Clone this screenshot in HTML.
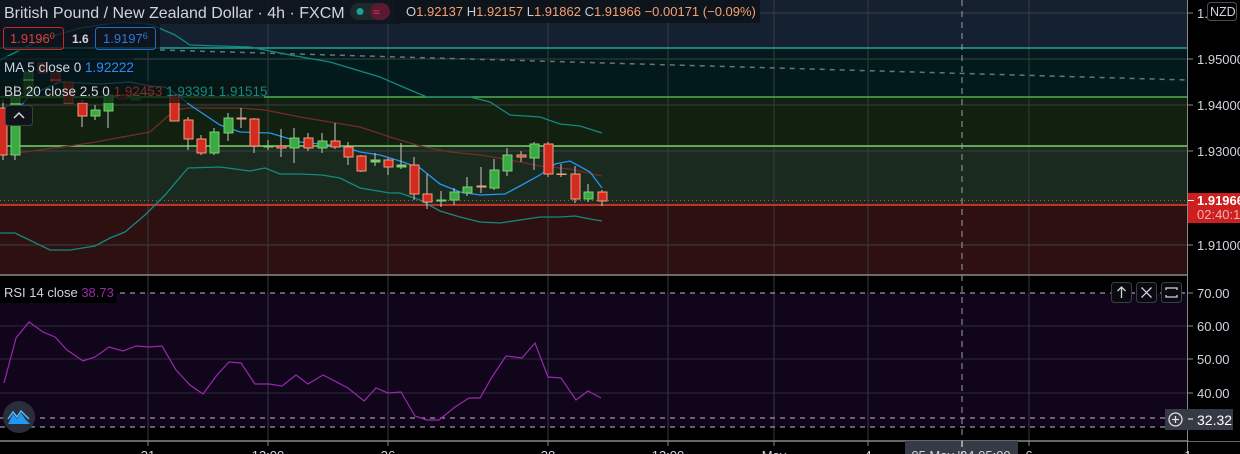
<!DOCTYPE html>
<html><head><meta charset="utf-8"><style>
html,body{margin:0;padding:0;background:#000;width:1240px;height:454px;overflow:hidden}
svg{display:block;font-family:"Liberation Sans",sans-serif}
</style></head><body>
<svg width="1240" height="454" viewBox="0 0 1240 454" xmlns="http://www.w3.org/2000/svg">
<rect x="0" y="0" width="1188" height="48" fill="#152130"/>
<rect x="0" y="48" width="1188" height="49" fill="#031a1c"/>
<rect x="0" y="97" width="1188" height="49" fill="#12200f"/>
<rect x="0" y="146" width="1188" height="59" fill="#1b2a1f"/>
<rect x="0" y="205" width="1188" height="70" fill="#2e1010"/>
<rect x="0" y="276" width="1188" height="165" fill="#000"/>
<rect x="0" y="293" width="1188" height="134" fill="#10051a"/>
<g stroke="#3a4040" stroke-width="1">
<line x1="0" y1="13" x2="1188" y2="13"/><line x1="0" y1="59" x2="1188" y2="59"/>
<line x1="0" y1="105" x2="1188" y2="105"/><line x1="0" y1="151" x2="1188" y2="151"/>
<line x1="0" y1="245" x2="1188" y2="245"/>
</g>
<g stroke="#2e2a3c"><line x1="0" y1="326" x2="1188" y2="326"/><line x1="0" y1="359" x2="1188" y2="359"/><line x1="0" y1="393" x2="1188" y2="393"/></g>
<g stroke="#363c40" stroke-width="1">
<line x1="148" y1="0" x2="148" y2="441"/><line x1="268" y1="0" x2="268" y2="441"/>
<line x1="388" y1="0" x2="388" y2="441"/><line x1="548" y1="0" x2="548" y2="441"/>
<line x1="668" y1="0" x2="668" y2="441"/><line x1="774" y1="0" x2="774" y2="441"/>
<line x1="868" y1="0" x2="868" y2="441"/><line x1="1029" y1="0" x2="1029" y2="441"/>
</g>
<line x1="0" y1="48" x2="1188" y2="48" stroke="#1fa59a" stroke-width="1.5"/>
<line x1="0" y1="97" x2="1188" y2="97" stroke="#4caf50" stroke-width="1.5"/>
<line x1="0" y1="146" x2="1188" y2="146" stroke="#7ccf6e" stroke-width="1.5"/>
<line x1="0" y1="205" x2="1188" y2="205" stroke="#f23a2f" stroke-width="1.5"/>
<line x1="0" y1="200.5" x2="1188" y2="200.5" stroke="#f23a2f" stroke-width="1" stroke-dasharray="1,3"/>
<line x1="160" y1="50" x2="1187" y2="80" stroke="#6a7478" stroke-width="1.5" stroke-dasharray="5,5"/>
<line x1="0" y1="275" x2="1188" y2="275" stroke="#888" stroke-width="1.5"/>
<line x1="0" y1="441" x2="1240" y2="441" stroke="#888" stroke-width="1.5"/>
<line x1="1187.5" y1="0" x2="1187.5" y2="454" stroke="#888" stroke-width="1"/>
<line x1="962" y1="0" x2="962" y2="454" stroke="#9aa0a8" stroke-width="1" stroke-dasharray="6,5"/>
<g stroke="#c0bcc8" stroke-width="1" stroke-dasharray="5,5">
<line x1="0" y1="293" x2="1188" y2="293"/><line x1="0" y1="418" x2="1188" y2="418"/><line x1="0" y1="427" x2="1188" y2="427"/>
</g>
<polyline fill="none" stroke="#128a80" stroke-width="1.3" points="0,60 40,40 80,28 120,22 150,24 175,35 190,45 250,47 290,55 330,62 380,77 410,90 427,97 470,97 490,102 510,115 540,117 560,124 580,126 602,133"/>
<polyline fill="none" stroke="#128a80" stroke-width="1.3" points="0,233 15,233 50,250 70,250 95,246 110,238 125,232 145,215 165,195 188,168 220,167 250,171 265,168 280,174 300,174 322,175 340,178 360,188 390,193 400,193 420,200 440,211 460,217 480,222 500,223 520,220 540,217 560,217 575,216 590,219 602,221"/>
<polyline fill="none" stroke="#742a28" stroke-width="1.3" points="0,155 40,150 90,143 150,132 175,110 188,108 240,108 265,110 300,117 330,122 360,127 390,137 420,146 450,152 480,155 510,160 540,166 570,169 602,176"/>
<polyline fill="none" stroke="#2196f3" stroke-width="1.3" points="0,130 30,95 60,82 100,84 130,82 150,86 165,87 175,93 190,105 205,115 220,125 240,132 270,133 300,142 330,145 345,147 360,152 380,155 400,161 420,168 440,184 460,192 480,195 505,194 520,186 540,175 555,164 570,161 590,172 602,188"/>
<g stroke="#c8c8c8" stroke-width="1">
<line x1="3" y1="100" x2="3" y2="160"/><line x1="15" y1="85" x2="15" y2="160"/><line x1="82" y1="100" x2="82" y2="127"/><line x1="95" y1="105" x2="95" y2="120"/><line x1="108" y1="90" x2="108" y2="128"/>
<line x1="188" y1="117" x2="188" y2="150"/><line x1="201" y1="135" x2="201" y2="155"/><line x1="214" y1="128" x2="214" y2="155"/><line x1="228" y1="113" x2="228" y2="141"/><line x1="241" y1="108" x2="241" y2="128"/><line x1="254" y1="118" x2="254" y2="153"/><line x1="268" y1="140" x2="268" y2="150"/><line x1="281" y1="129" x2="281" y2="157"/><line x1="294" y1="128" x2="294" y2="163"/>
<line x1="308" y1="133" x2="308" y2="151"/><line x1="322" y1="133" x2="322" y2="153"/><line x1="335" y1="123" x2="335" y2="149"/><line x1="348" y1="142" x2="348" y2="165"/><line x1="361" y1="155" x2="361" y2="172"/><line x1="375" y1="153" x2="375" y2="166"/><line x1="388" y1="158" x2="388" y2="175"/><line x1="401" y1="143" x2="401" y2="169"/><line x1="414" y1="157" x2="414" y2="200"/><line x1="427" y1="174" x2="427" y2="209"/><line x1="441" y1="191" x2="441" y2="207"/><line x1="454" y1="188" x2="454" y2="205"/><line x1="467" y1="177" x2="467" y2="196"/><line x1="481" y1="167" x2="481" y2="193"/><line x1="494" y1="159" x2="494" y2="190"/><line x1="507" y1="148" x2="507" y2="176"/><line x1="521" y1="151" x2="521" y2="162"/><line x1="534" y1="142" x2="534" y2="170"/><line x1="548" y1="142" x2="548" y2="177"/><line x1="561" y1="164" x2="561" y2="177"/><line x1="575" y1="166" x2="575" y2="203"/><line x1="588" y1="184" x2="588" y2="202"/><line x1="602" y1="190" x2="602" y2="206"/>
</g>
<g stroke-width="1">
<rect x="-3" y="108" width="10" height="47" fill="#d32a22" stroke="#f5a07a"/>
<rect x="11" y="95" width="9" height="60" fill="#3aaa45" stroke="#7ad06c"/>
<rect x="24" y="72" width="9" height="25" fill="#28662c" stroke="#3c8a40"/>
<rect x="38" y="63" width="9" height="10" fill="#6a1e1c" stroke="#8a3a2a"/>
<rect x="51" y="73" width="9" height="9" fill="#6a1e1c" stroke="#8a3a2a"/>
<rect x="64" y="82" width="9" height="21" fill="#a82420" stroke="#b86a4a"/>
<rect x="78" y="103" width="9" height="13" fill="#d32a22" stroke="#f5a07a"/>
<rect x="91" y="110" width="9" height="6" fill="#3aaa45" stroke="#7ad06c"/>
<rect x="104" y="95" width="9" height="16" fill="#3aaa45" stroke="#7ad06c"/>
<rect x="118" y="95" width="9" height="4" fill="#6a1e1c" stroke="#8a3a2a"/>
<rect x="131" y="94" width="9" height="6" fill="#2a6a2c" stroke="#3c8a40"/>
<rect x="144" y="93" width="9" height="1" fill="#3aaa45" stroke="#3c8a40"/>
<rect x="170" y="95" width="9" height="26" fill="#d32a22" stroke="#f5a07a"/>
<rect x="184" y="120" width="9" height="19" fill="#d32a22" stroke="#f5a07a"/>
<rect x="197" y="139" width="9" height="14" fill="#d32a22" stroke="#f5a07a"/>
<rect x="210" y="132" width="9" height="21" fill="#3aaa45" stroke="#7ad06c"/>
<rect x="224" y="118" width="9" height="15" fill="#3aaa45" stroke="#7ad06c"/>
<rect x="237" y="118" width="9" height="1" fill="#f5a07a" stroke="#f5a07a"/>
<rect x="250" y="119" width="9" height="27" fill="#d32a22" stroke="#f5a07a"/>
<rect x="264" y="146" width="9" height="1" fill="#7ad06c" stroke="#7ad06c"/>
<rect x="277" y="146" width="9" height="2" fill="#d32a22" stroke="#f5a07a"/>
<rect x="290" y="138" width="9" height="10" fill="#3aaa45" stroke="#7ad06c"/>
<rect x="304" y="138" width="9" height="10" fill="#d32a22" stroke="#f5a07a"/>
<rect x="318" y="141" width="9" height="7" fill="#3aaa45" stroke="#7ad06c"/>
<rect x="331" y="141" width="9" height="6" fill="#d32a22" stroke="#f5a07a"/>
<rect x="344" y="147" width="9" height="10" fill="#d32a22" stroke="#f5a07a"/>
<rect x="357" y="156" width="9" height="15" fill="#d32a22" stroke="#f5a07a"/>
<rect x="371" y="160" width="9" height="2" fill="#7ad06c" stroke="#7ad06c"/>
<rect x="384" y="160" width="9" height="7" fill="#d32a22" stroke="#f5a07a"/>
<rect x="397" y="165" width="9" height="2" fill="#7ad06c" stroke="#7ad06c"/>
<rect x="410" y="165" width="9" height="29" fill="#d32a22" stroke="#f5a07a"/>
<rect x="423" y="194" width="9" height="8" fill="#d32a22" stroke="#f5a07a"/>
<rect x="437" y="200" width="9" height="1" fill="#7ad06c" stroke="#7ad06c"/>
<rect x="450" y="192" width="9" height="8" fill="#3aaa45" stroke="#7ad06c"/>
<rect x="463" y="187" width="9" height="6" fill="#3aaa45" stroke="#7ad06c"/>
<rect x="477" y="186" width="9" height="1" fill="#f5a07a" stroke="#f5a07a"/>
<rect x="490" y="170" width="9" height="18" fill="#3aaa45" stroke="#7ad06c"/>
<rect x="503" y="155" width="9" height="16" fill="#3aaa45" stroke="#7ad06c"/>
<rect x="517" y="155" width="9" height="2" fill="#d32a22" stroke="#f5a07a"/>
<rect x="530" y="144" width="9" height="14" fill="#3aaa45" stroke="#7ad06c"/>
<rect x="544" y="144" width="9" height="30" fill="#d32a22" stroke="#f5a07a"/>
<rect x="557" y="174" width="9" height="0.5" fill="#f5a07a" stroke="#f5a07a"/>
<rect x="571" y="174" width="9" height="25" fill="#d32a22" stroke="#f5a07a"/>
<rect x="584" y="192" width="9" height="7" fill="#3aaa45" stroke="#7ad06c"/>
<rect x="598" y="192" width="9" height="9" fill="#d32a22" stroke="#f5a07a"/>
</g>
<polyline fill="none" stroke="#9c27b0" stroke-width="1.2" points="4,383 16,338 29,322 43,332 55,337 67,350 83,361 95,357 109,347 123,351 136,346 150,347 162,346 176,370 190,385 203,394 217,375 229,362 241,363 255,384 269,384 282,386 296,375 308,384 323,375 348,388 364,401 376,388 388,393 401,392 415,416 427,420 439,420 455,407 469,398 480,398 492,377 506,356 522,358 535,343 548,377 561,378 576,400 588,391 601,398"/>
<rect x="0" y="0" width="400" height="24" fill="#0e141c" opacity="0.85"/>
<text x="4" y="18" font-size="16" fill="#d1d4dc">British Pound / New Zealand Dollar · 4h · FXCM</text>
<rect x="350" y="3" width="40" height="17" rx="8.5" fill="#1c2a2c"/>
<rect x="370" y="3" width="20" height="17" rx="8.5" fill="#5a1a30"/>
<circle cx="360" cy="11.5" r="3.5" fill="#17a398"/>
<text x="373" y="16" font-size="12" fill="#e03a6a">≈</text>
<rect x="394" y="0" width="366" height="23" fill="#0e141c"/>
<text x="406" y="16" font-size="13" fill="#f7a072"><tspan fill="#c9cdd4">O</tspan>1.92137 <tspan fill="#c9cdd4">H</tspan>1.92157 <tspan fill="#c9cdd4">L</tspan>1.91862 <tspan fill="#c9cdd4">C</tspan>1.91966 −0.00171 (−0.09%)</text>
<rect x="0" y="24" width="160" height="27" fill="#0a1016" opacity="0.7"/>
<rect x="3.5" y="27.5" width="60" height="22" rx="3" fill="none" stroke="#c62828"/>
<text x="10" y="43" font-size="13" fill="#e0403a">1.9196<tspan font-size="9" dy="-4">0</tspan></text>
<text x="72" y="43" font-size="12" fill="#d1d4dc" font-weight="bold">1.6</text>
<rect x="95.5" y="27.5" width="60" height="22" rx="3" fill="none" stroke="#1e6bc8"/>
<text x="103" y="43" font-size="13" fill="#2a7ad8">1.9197<tspan font-size="9" dy="-4">6</tspan></text>
<rect x="0" y="56" width="134" height="23" fill="#05121a" opacity="0.6"/>
<text x="4" y="72" font-size="13.5" fill="#d1d4dc">MA 5 close 0 <tspan fill="#2a8ef0">1.92222</tspan></text>
<rect x="0" y="81" width="264" height="22" fill="#0a1410" opacity="0.7"/>
<text x="4" y="96" font-size="13.5" fill="#d1d4dc">BB 20 close 2.5 0 <tspan fill="#8a2a26">1.92453</tspan> <tspan fill="#138a80">1.93391</tspan> <tspan fill="#138a80">1.91515</tspan></text>
<rect x="5.5" y="105.5" width="27" height="20" rx="3" fill="#0e1418" stroke="#3a4046"/>
<path d="M14 118 L19 113 L24 118" fill="none" stroke="#d1d4dc" stroke-width="1.5"/>
<rect x="0" y="283" width="116" height="20" fill="#000"/>
<text x="4" y="297" font-size="13" fill="#d1d4dc">RSI 14 close <tspan fill="#9c27b0">38.73</tspan></text>
<g fill="#0a0a10" stroke="#3a3e48">
<rect x="1111.5" y="282.5" width="20" height="20" rx="3"/><rect x="1136.5" y="282.5" width="20" height="20" rx="3"/><rect x="1161.5" y="282.5" width="20" height="20" rx="3"/>
</g>
<g stroke="#d1d4dc" stroke-width="1.3" fill="none">
<path d="M1121.5 298 V287 M1117.5 291 L1121.5 287 L1125.5 291"/>
<path d="M1141.5 287.5 L1151.5 297.5 M1151.5 287.5 L1141.5 297.5"/>
<path d="M1166 290 V288 H1177 V290 M1166 295 V297 H1177 V295"/>
</g>
<circle cx="19" cy="417" r="16" fill="#2a2e39"/>
<path d="M8 424 L13 414 L17 419 L21 413 L26 420 L30 424 Z" fill="#2196f3"/>
<path d="M8 419 L13 412 L17 417 L21 411 L29 419" fill="none" stroke="#5ab8ff" stroke-width="1.5"/>
<rect x="1188.5" y="0" width="52" height="441" fill="#000"/>
<g stroke="#888"><line x1="1188" y1="13" x2="1193" y2="13"/><line x1="1188" y1="59" x2="1193" y2="59"/><line x1="1188" y1="105" x2="1193" y2="105"/><line x1="1188" y1="151" x2="1193" y2="151"/><line x1="1188" y1="245" x2="1193" y2="245"/><line x1="1188" y1="293" x2="1193" y2="293"/><line x1="1188" y1="326" x2="1193" y2="326"/><line x1="1188" y1="359" x2="1193" y2="359"/><line x1="1188" y1="393" x2="1193" y2="393"/></g>
<g font-size="13" fill="#d1d4dc">
<text x="1197" y="18">1.</text>
<text x="1197" y="64">1.95000</text><text x="1197" y="110">1.94000</text><text x="1197" y="156">1.93000</text><text x="1197" y="250">1.91000</text>
<text x="1197" y="298">70.00</text><text x="1197" y="331">60.00</text><text x="1197" y="364">50.00</text><text x="1197" y="398">40.00</text>
</g>
<rect x="1207.5" y="2.5" width="29" height="18" rx="3" fill="#000" stroke="#4a4e58"/>
<text x="1210" y="16" font-size="12.5" fill="#d1d4dc">NZD</text>
<rect x="1188" y="193" width="52" height="30" fill="#cc1f1f"/>
<line x1="1188" y1="200.5" x2="1194" y2="200.5" stroke="#fff"/>
<text x="1197" y="205" font-size="13" fill="#fff" font-weight="bold">1.91966</text>
<text x="1197" y="219" font-size="13" fill="#f4b0b0">02:40:10</text>
<rect x="1165" y="409" width="68" height="21" fill="#363a45"/>
<circle cx="1175.5" cy="419.5" r="6.5" fill="none" stroke="#e0e0e0" stroke-width="1.3"/>
<path d="M1175.5 416 V423 M1172 419.5 H1179" stroke="#e0e0e0" stroke-width="1.3"/>
<line x1="1188" y1="419" x2="1193" y2="419" stroke="#fff"/>
<text x="1197" y="425" font-size="14" fill="#fff">32.32</text>
<g stroke="#888"><line x1="148" y1="441" x2="148" y2="446"/><line x1="268" y1="441" x2="268" y2="446"/><line x1="388" y1="441" x2="388" y2="446"/><line x1="548" y1="441" x2="548" y2="446"/><line x1="668" y1="441" x2="668" y2="446"/><line x1="774" y1="441" x2="774" y2="446"/><line x1="868" y1="441" x2="868" y2="446"/><line x1="1029" y1="441" x2="1029" y2="446"/></g>
<g font-size="13" fill="#d1d4dc" text-anchor="middle">
<text x="148" y="460">21</text><text x="268" y="460">12:00</text><text x="388" y="460">26</text><text x="548" y="460">28</text><text x="668" y="460">12:00</text><text x="774" y="460">May</text><text x="868" y="460">4</text><text x="1029" y="460">6</text><text x="1188" y="460">1</text>
</g>
<rect x="905" y="441" width="113" height="13" fill="#363a45"/>
<text x="961" y="460" font-size="13" fill="#d1d4dc" text-anchor="middle">05 May '24  05:00</text>
<line x1="962" y1="441" x2="962" y2="454" stroke="#fff" stroke-dasharray="6,5"/>
</svg>
</body></html>
